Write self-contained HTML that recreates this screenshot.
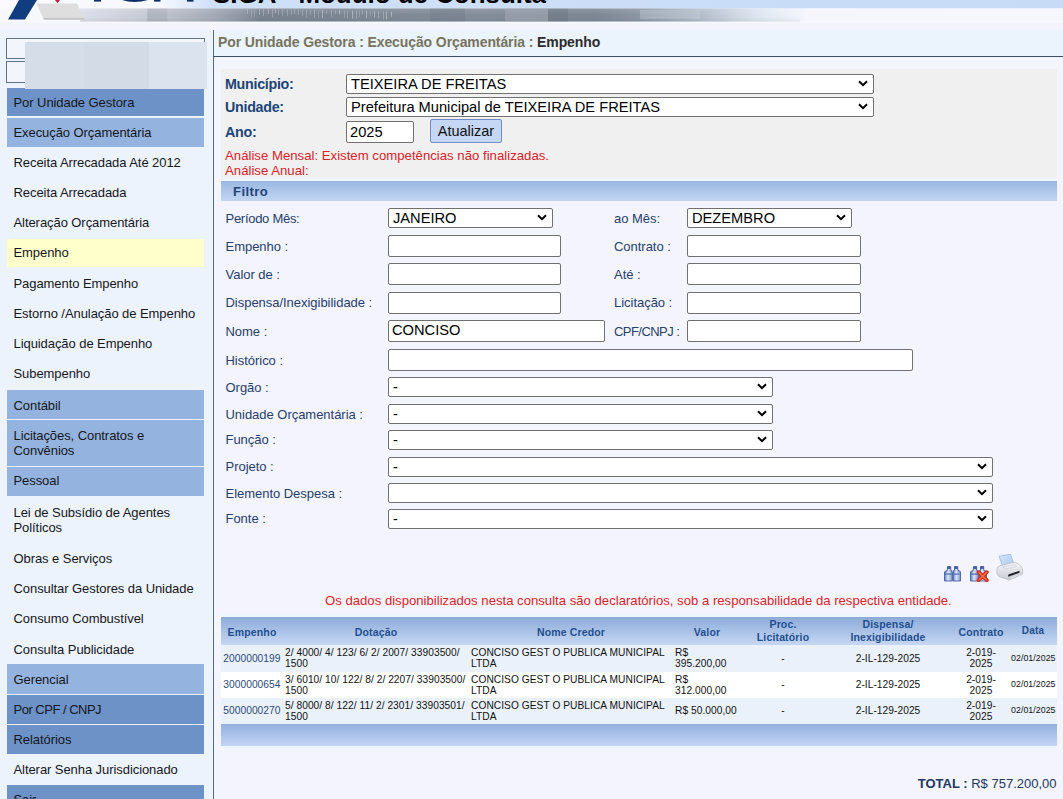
<!DOCTYPE html>
<html>
<head>
<meta charset="utf-8">
<title>Consulta</title>
<style>
html,body{margin:0;padding:0;}
body{width:1063px;height:799px;overflow:hidden;position:relative;background:#f3f4fd;font-family:"Liberation Sans",sans-serif;font-size:12px;color:#000;}
.abs{position:absolute;}
/* header */
/* sidebar */
#side{left:0;top:30px;width:213px;height:770px;background:#edf3fc;}
#vline{left:213px;top:30px;width:1px;height:769px;background:#566b80;}
#hline{left:213px;top:56px;width:850px;height:1px;background:#3c5063;}
.box{left:6px;width:196.5px;border:1px solid #627286;background:#f2f6fc;box-sizing:content-box;}
#ovl{left:25px;top:42px;width:182px;height:47px;}
#ovl i{position:absolute;top:0;height:47px;display:block;}
.mi{left:7px;width:197px;line-height:15.7px;box-sizing:border-box;padding-left:6.5px;font-size:13px;letter-spacing:-0.07px;color:#15171c;white-space:nowrap;overflow:hidden;}
.mi.two{white-space:normal;}
.d1{background:#6c92c7;}
.d2{background:#94b3de;}
.ye{background:#ffffcc;}
/* breadcrumb */
#bc{left:218px;top:34.4px;font-size:14px;font-weight:bold;color:#77735f;white-space:nowrap;letter-spacing:-0.1px;}
#bc b{color:#2b2b2b;}
/* grey panel */
#gp{left:220.5px;top:69px;width:836px;height:109px;background:#f0f0f0;}
.lb1{left:225px;font-size:14.3px;font-weight:bold;color:#1d4577;letter-spacing:-0.3px;}
.sel{background:#fff;border:1px solid #707070;border-radius:2px;box-sizing:border-box;font-size:14.67px;color:#000;white-space:nowrap;overflow:hidden;}
.sel span{position:absolute;left:4px;top:0;}
.sel svg{position:absolute;right:5px;top:50%;margin-top:-4px;}
.inp{background:#fff;border:1px solid #707070;border-radius:2px;box-sizing:border-box;font-size:14.67px;}
.red{color:#d8232a;font-size:13.2px;left:225px;white-space:nowrap;line-height:15px;}
#filtro{left:220.5px;top:181px;width:836px;height:20px;background:linear-gradient(180deg,#98b3dc 0,#9dbae3 8%,#c2d6f4 100%);box-shadow:0 -3px 0 #eef5fd;}
#filtro span{position:absolute;left:12.5px;top:3px;font-weight:bold;font-size:13px;letter-spacing:0.45px;color:#1f4478;line-height:15px;}
.lb2{font-size:13px;color:#27406a;white-space:nowrap;letter-spacing:-0.03px;left:225.5px;line-height:16px;}
.lb2.r{left:614px;}
.chev{position:absolute;right:5px;top:50%;margin-top:-4px;}
#redmsg{left:325px;top:593px;font-size:13.15px;color:#d8232a;white-space:nowrap;}
#th{left:220.5px;top:617px;width:836px;height:28px;background:linear-gradient(180deg,#8ba7d0 0,#90aedb 6%,#c6d7f4 100%);box-shadow:0 -3px 0 #eef5fd;}
.thc{font-size:10.5px;letter-spacing:0.15px;font-weight:bold;color:#1f4f8f;text-align:center;line-height:12px;white-space:nowrap;transform:translateX(-50%);}
.row{left:220.5px;width:836px;}
.td{font-size:10.2px;letter-spacing:0.05px;line-height:11px;color:#111;white-space:nowrap;}
.tdc{transform:translateX(-50%);text-align:center;}
#tf{left:220.5px;top:724px;width:836px;height:21.8px;background:linear-gradient(180deg,#92aed8 0,#97b4df 8%,#c3d4f6 100%);box-shadow:0 3px 0 #eef5fd;}
#total{right:6.5px;top:775.7px;font-size:13px;color:#22385c;white-space:nowrap;}

</style>
</head>
<body>
<svg class="abs" id="hdr" style="left:0;top:0;" width="1063" height="23" viewBox="0 0 1063 23">
<defs>
<linearGradient id="gtop" x1="0" y1="0" x2="1063" y2="0" gradientUnits="userSpaceOnUse">
<stop offset="0" stop-color="#fafaff"/><stop offset="0.15" stop-color="#f6f8ff"/><stop offset="0.2" stop-color="#cfe0f9"/><stop offset="1" stop-color="#c7dbf7"/>
</linearGradient>
<linearGradient id="gph" x1="0" y1="0" x2="1063" y2="0" gradientUnits="userSpaceOnUse">
<stop offset="0.075" stop-color="#dcdfeb"/><stop offset="0.138" stop-color="#c6cad5"/><stop offset="0.139" stop-color="#b0b4bf"/><stop offset="0.157" stop-color="#b0b4bf"/><stop offset="0.158" stop-color="#bbbfca"/><stop offset="0.2" stop-color="#a4aab6"/><stop offset="0.225" stop-color="#8f97a4"/><stop offset="0.245" stop-color="#78828e"/><stop offset="0.3" stop-color="#7a8491"/><stop offset="0.45" stop-color="#828c99"/><stop offset="0.56" stop-color="#7b8592"/><stop offset="0.6" stop-color="#8a95a3"/><stop offset="0.66" stop-color="#b3bdca"/><stop offset="0.71" stop-color="#dde4ef"/><stop offset="0.76" stop-color="#f5f7fd"/>
</linearGradient>
<linearGradient id="gphv" x1="0" y1="9" x2="0" y2="22" gradientUnits="userSpaceOnUse">
<stop offset="0" stop-color="#fff" stop-opacity="0.12"/><stop offset="0.5" stop-color="#fff" stop-opacity="0"/><stop offset="1" stop-color="#000" stop-opacity="0.08"/>
</linearGradient>
</defs>
<rect x="0" y="0" width="1063" height="23" fill="#f7f8fe"/>
<rect x="0" y="0" width="1063" height="8.5" fill="url(#gtop)"/>
<rect x="80" y="8.5" width="983" height="13" fill="url(#gph)"/>
<rect x="80" y="8.5" width="720" height="13" fill="url(#gphv)"/>
<rect x="247" y="9.0" width="1" height="5" fill="#dfe4ea" opacity="0.35"/><rect x="251" y="9.0" width="1" height="8" fill="#dfe4ea" opacity="0.3"/><rect x="254" y="9.0" width="1" height="8" fill="#dfe4ea" opacity="0.25"/><rect x="259" y="9.0" width="1" height="6" fill="#dfe4ea" opacity="0.35"/><rect x="263" y="9.0" width="1" height="7" fill="#dfe4ea" opacity="0.3"/><rect x="268" y="9.0" width="1" height="5" fill="#dfe4ea" opacity="0.35"/><rect x="272" y="9.0" width="1" height="8" fill="#dfe4ea" opacity="0.3"/><rect x="275" y="9.0" width="1" height="4" fill="#dfe4ea" opacity="0.35"/><rect x="278" y="9.0" width="1" height="6" fill="#dfe4ea" opacity="0.25"/><rect x="282" y="9.0" width="1" height="7" fill="#dfe4ea" opacity="0.3"/><rect x="287" y="9.0" width="1" height="7" fill="#dfe4ea" opacity="0.3"/><rect x="291" y="9.0" width="1" height="6" fill="#dfe4ea" opacity="0.25"/><rect x="294" y="9.0" width="1" height="5" fill="#dfe4ea" opacity="0.3"/><rect x="298" y="9.0" width="1" height="6" fill="#dfe4ea" opacity="0.3"/><rect x="302" y="9.1" width="1" height="7" fill="#dfe4ea" opacity="0.3"/><rect x="306" y="9.2" width="1" height="8" fill="#dfe4ea" opacity="0.3"/><rect x="310" y="9.3" width="1" height="6" fill="#dfe4ea" opacity="0.25"/><rect x="314" y="9.4" width="1" height="8" fill="#dfe4ea" opacity="0.35"/><rect x="318" y="9.5" width="1" height="8" fill="#dfe4ea" opacity="0.25"/><rect x="322" y="9.7" width="1" height="8" fill="#dfe4ea" opacity="0.45"/><rect x="326" y="9.8" width="1" height="4" fill="#dfe4ea" opacity="0.25"/><rect x="331" y="9.9" width="1" height="7" fill="#dfe4ea" opacity="0.25"/><rect x="335" y="10.1" width="1" height="4" fill="#dfe4ea" opacity="0.3"/><rect x="339" y="10.2" width="1" height="4" fill="#dfe4ea" opacity="0.45"/><rect x="344" y="10.3" width="1" height="7" fill="#dfe4ea" opacity="0.25"/><rect x="347" y="10.4" width="1" height="8" fill="#dfe4ea" opacity="0.25"/><rect x="352" y="10.6" width="1" height="8" fill="#dfe4ea" opacity="0.45"/><rect x="356" y="10.7" width="1" height="8" fill="#dfe4ea" opacity="0.35"/><rect x="359" y="10.8" width="1" height="6" fill="#dfe4ea" opacity="0.25"/><rect x="362" y="10.9" width="1" height="4" fill="#dfe4ea" opacity="0.25"/><rect x="366" y="11.0" width="1" height="7" fill="#dfe4ea" opacity="0.45"/><rect x="370" y="11.1" width="1" height="5" fill="#dfe4ea" opacity="0.25"/><rect x="374" y="11.2" width="1" height="6" fill="#dfe4ea" opacity="0.45"/><rect x="378" y="11.3" width="1" height="7" fill="#dfe4ea" opacity="0.3"/><rect x="383" y="11.5" width="1" height="8" fill="#dfe4ea" opacity="0.3"/><rect x="386" y="11.6" width="1" height="8" fill="#dfe4ea" opacity="0.45"/><rect x="391" y="11.7" width="1" height="5" fill="#dfe4ea" opacity="0.45"/><rect x="505" y="8.5" width="43" height="13" fill="#aab2bd" opacity="0.45"/><rect x="548" y="8.5" width="20" height="13" fill="#59626e" opacity="0.25"/><rect x="430" y="8.5" width="35" height="13" fill="#5d6672" opacity="0.2"/><rect x="640" y="10" width="60" height="9" fill="#c9d0da" opacity="0.35"/>
<polygon points="19,0 37,0 25,19.5 8,19.5" fill="#103d7f"/>
<polygon points="36.5,3.5 77,3.5 85,19.5 44,19.5" fill="#dedede"/>
<polygon points="43.2,18 84.2,18 85,19.8 44,19.8" fill="#c4c4c6"/>
<polygon points="55,0 60,0 57.5,3.2" fill="#c0203a"/>
<rect x="94" y="0" width="7" height="1.6" fill="#0d2e66"/>
<path d="M122 0 Q134 4 148 0 Z" fill="#0d2e66"/>
<rect x="154" y="0" width="6.5" height="1.6" fill="#0d2e66"/>
<rect x="187" y="0" width="6.5" height="1.6" fill="#0d2e66"/>
<text x="213" y="2.6" font-family="Liberation Sans" font-weight="bold" font-size="25" fill="#000" textLength="333" lengthAdjust="spacingAndGlyphs">SIGA - Módulo de Consulta</text>
</svg>
<div class="abs" id="side"></div>
<div class="abs" style="left:214px;top:30px;width:849px;height:26px;background:#ebf3fc;"></div>
<div class="abs" style="left:220.5px;top:62px;width:836px;height:7px;background:#f3f6fa;"></div>
<div class="abs" id="vline"></div>
<div class="abs" id="hline"></div>

<div class="abs box" style="top:38px;height:19px;"></div>
<div class="abs box" style="top:61px;height:20px;"></div>

<div class="abs mi d1" style="top:88.25px;height:27.3px;padding-top:6.90px;">Por Unidade Gestora</div>
<div class="abs mi d2" style="top:118px;height:28.75px;padding-top:6.85px;">Execução Orçamentária</div>
<div class="abs mi" style="top:148.75px;height:28.5px;padding-top:5.90px;">Receita Arrecadada Até 2012</div>
<div class="abs mi" style="top:179px;height:28.5px;padding-top:6.15px;">Receita Arrecadada</div>
<div class="abs mi" style="top:209.25px;height:28.5px;padding-top:5.90px;">Alteração Orçamentária</div>
<div class="abs mi ye" style="top:239px;height:28.4px;padding-top:6.45px;">Empenho</div>
<div class="abs mi" style="top:270px;height:28.5px;padding-top:6.45px;">Pagamento Empenho</div>
<div class="abs mi" style="top:300px;height:28.5px;padding-top:6.45px;">Estorno /Anulação de Empenho</div>
<div class="abs mi" style="top:330px;height:28.5px;padding-top:6.45px;">Liquidação de Empenho</div>
<div class="abs mi" style="top:360px;height:28.5px;padding-top:6.35px;">Subempenho</div>
<div class="abs mi d2" style="top:389.7px;height:29.3px;padding-top:8.05px;">Contábil</div>
<div class="abs mi d2 two" style="top:420px;height:46px;padding-top:7.75px;">Licitações, Contratos e<br>Convênios</div>
<div class="abs mi d2" style="top:467px;height:28.6px;padding-top:6.15px;">Pessoal</div>
<div class="abs mi two" style="top:498px;height:44px;padding-top:6.75px;">Lei de Subsídio de Agentes<br>Políticos</div>
<div class="abs mi" style="top:544px;height:28.5px;padding-top:6.75px;">Obras e Serviços</div>
<div class="abs mi" style="top:574px;height:28.5px;padding-top:6.85px;">Consultar Gestores da Unidade</div>
<div class="abs mi" style="top:604px;height:28.5px;padding-top:6.95px;">Consumo Combustível</div>
<div class="abs mi" style="top:635px;height:28.5px;padding-top:6.55px;">Consulta Publicidade</div>
<div class="abs mi d2" style="top:664px;height:29.6px;padding-top:7.85px;">Gerencial</div>
<div class="abs mi d1" style="top:695px;height:28.6px;padding-top:6.75px;letter-spacing:-0.5px;">Por CPF / CNPJ</div>
<div class="abs mi d1" style="top:725px;height:28.6px;padding-top:6.55px;">Relatórios</div>
<div class="abs mi" style="top:756px;height:28.5px;padding-top:6.45px;">Alterar Senha Jurisdicionado</div>
<div class="abs mi d1" style="top:785px;height:28.6px;padding-top:7.45px;">Sair</div>

<div class="abs" id="ovl"><i style="left:0;width:58.5px;background:#d5dde9"></i><i style="left:58.5px;width:65.5px;background:#d3dbe7"></i><i style="left:124px;width:58px;background:#dbe3ef"></i></div>
<div class="abs" id="bc">Por Unidade Gestora : Execução Orçamentária : <b>Empenho</b></div>

<div class="abs" id="gp"></div>
<div class="abs lb1" style="top:76px;">Município:</div>
<div class="abs lb1" style="top:99px;">Unidade:</div>
<div class="abs lb1" style="top:124px;">Ano:</div>
<div class="abs sel" style="left:346px;top:73.5px;width:528px;height:20.5px;line-height:18.5px;"><span>TEIXEIRA DE FREITAS</span><svg width="10" height="7" viewBox="0 0 10 7"><path d="M1 1.2 L5 5.2 L9 1.2" fill="none" stroke="#000" stroke-width="2"/></svg></div>
<div class="abs sel" style="left:346px;top:96.5px;width:528px;height:20.5px;line-height:18.5px;"><span>Prefeitura Municipal de TEIXEIRA DE FREITAS</span><svg width="10" height="7" viewBox="0 0 10 7"><path d="M1 1.2 L5 5.2 L9 1.2" fill="none" stroke="#000" stroke-width="2"/></svg></div>
<div class="abs inp" style="left:346px;top:120.5px;width:68px;height:22px;line-height:20px;padding-left:3px;">2025</div>
<div class="abs" style="left:430px;top:119px;width:72px;height:24px;box-sizing:border-box;border:1px solid #6f8fc4;background:#c5d7f5;border-radius:2px;font-size:14.5px;line-height:22px;text-align:center;color:#111;">Atualizar</div>
<div class="abs red" style="top:148px;">Análise Mensal: Existem competências não finalizadas.</div>
<div class="abs red" style="top:162.5px;">Análise Anual:</div>

<div class="abs" id="filtro"><span>Filtro</span></div>

<!-- filter rows -->
<div class="abs lb2" style="top:210.5px;letter-spacing:-0.28px;">Período Mês:</div>
<div class="abs lb2" style="top:238.6px;">Empenho :</div>
<div class="abs lb2" style="top:266.6px;">Valor de :</div>
<div class="abs lb2" style="top:295.3px;">Dispensa/Inexigibilidade :</div>
<div class="abs lb2" style="top:323.5px;">Nome :</div>
<div class="abs lb2" style="top:352.6px;">Histórico :</div>
<div class="abs lb2" style="top:379.7px;">Orgão :</div>
<div class="abs lb2" style="top:406.7px;">Unidade Orçamentária :</div>
<div class="abs lb2" style="top:432.1px;">Função :</div>
<div class="abs lb2" style="top:458.7px;">Projeto :</div>
<div class="abs lb2" style="top:485.6px;">Elemento Despesa :</div>
<div class="abs lb2" style="top:511.1px;">Fonte :</div>
<div class="abs lb2 r" style="top:210.5px;">ao Mês:</div>
<div class="abs lb2 r" style="top:238.6px;">Contrato :</div>
<div class="abs lb2 r" style="top:266.6px;">Até :</div>
<div class="abs lb2 r" style="top:295.3px;">Licitação :</div>
<div class="abs lb2 r" style="top:323.5px;letter-spacing:-0.55px;">CPF/CNPJ :</div>

<div class="abs sel" style="left:388px;top:208px;width:165px;height:20px;line-height:18px;"><span>JANEIRO</span><svg class="chev" width="10" height="7" viewBox="0 0 10 7"><path d="M1 1.2 L5 5.2 L9 1.2" fill="none" stroke="#000" stroke-width="2"/></svg></div>
<div class="abs sel" style="left:687px;top:208px;width:165px;height:20px;line-height:18px;"><span>DEZEMBRO</span><svg class="chev" width="10" height="7" viewBox="0 0 10 7"><path d="M1 1.2 L5 5.2 L9 1.2" fill="none" stroke="#000" stroke-width="2"/></svg></div>
<div class="abs inp" style="left:388px;top:235.2px;width:173px;height:21.6px;"></div>
<div class="abs inp" style="left:388px;top:263.4px;width:173px;height:21.6px;"></div>
<div class="abs inp" style="left:388px;top:292px;width:173px;height:21.6px;"></div>
<div class="abs inp" style="left:388px;top:320.2px;width:217px;height:21.6px;line-height:19px;padding-left:3px;">CONCISO</div>
<div class="abs inp" style="left:388px;top:349.2px;width:525px;height:21.6px;"></div>
<div class="abs inp" style="left:687px;top:235.2px;width:174px;height:21.6px;"></div>
<div class="abs inp" style="left:687px;top:263.4px;width:174px;height:21.6px;"></div>
<div class="abs inp" style="left:687px;top:292px;width:174px;height:21.6px;"></div>
<div class="abs inp" style="left:687px;top:320.2px;width:174px;height:21.6px;"></div>

<div class="abs sel" style="left:388px;top:377px;width:385px;height:20px;line-height:18px;"><span>-</span><svg class="chev" width="10" height="7" viewBox="0 0 10 7"><path d="M1 1.2 L5 5.2 L9 1.2" fill="none" stroke="#000" stroke-width="2"/></svg></div>
<div class="abs sel" style="left:388px;top:404px;width:385px;height:20px;line-height:18px;"><span>-</span><svg class="chev" width="10" height="7" viewBox="0 0 10 7"><path d="M1 1.2 L5 5.2 L9 1.2" fill="none" stroke="#000" stroke-width="2"/></svg></div>
<div class="abs sel" style="left:388px;top:430px;width:385px;height:20px;line-height:18px;"><span>-</span><svg class="chev" width="10" height="7" viewBox="0 0 10 7"><path d="M1 1.2 L5 5.2 L9 1.2" fill="none" stroke="#000" stroke-width="2"/></svg></div>
<div class="abs sel" style="left:388px;top:456.5px;width:605px;height:20px;line-height:18px;"><span>-</span><svg class="chev" width="10" height="7" viewBox="0 0 10 7"><path d="M1 1.2 L5 5.2 L9 1.2" fill="none" stroke="#000" stroke-width="2"/></svg></div>
<div class="abs sel" style="left:388px;top:483.3px;width:605px;height:20px;line-height:18px;"><svg class="chev" width="10" height="7" viewBox="0 0 10 7"><path d="M1 1.2 L5 5.2 L9 1.2" fill="none" stroke="#000" stroke-width="2"/></svg></div>
<div class="abs sel" style="left:388px;top:509.4px;width:605px;height:20px;line-height:18px;"><span>-</span><svg class="chev" width="10" height="7" viewBox="0 0 10 7"><path d="M1 1.2 L5 5.2 L9 1.2" fill="none" stroke="#000" stroke-width="2"/></svg></div>


<svg class="abs" style="left:944px;top:566px;" width="17" height="16" viewBox="0 0 17 16"><defs><linearGradient id="bg1" x1="0" y1="0" x2="1" y2="0"><stop offset="0" stop-color="#5f7dc0"/><stop offset="0.45" stop-color="#dde6f8"/><stop offset="1" stop-color="#7d97d2"/></linearGradient></defs>
<g stroke="#3a5599" stroke-width="0.8">
<path d="M3.5 0.5 h3.2 v3.8 h0.9 v1.4 h0.7 v9.3 h-7.8 v-9.3 h1.6 v-1.4 h1.4 z" fill="url(#bg1)"/>
<path d="M10.5 0.5 h3.2 v3.8 h1.4 v1.4 h1.4 v9.3 h-7.6 v-9.3 h0.7 v-1.4 h0.9 z" fill="url(#bg1)"/>
</g>
<rect x="3.3" y="0.4" width="3.6" height="2.6" fill="#4563ad"/><rect x="10.3" y="0.4" width="3.6" height="2.6" fill="#4563ad"/>
<rect x="0.9" y="7.3" width="7" height="1.6" fill="#4f6cb4" opacity="0.75"/><rect x="8.3" y="7.3" width="7" height="1.6" fill="#4f6cb4" opacity="0.75"/></svg>
<svg class="abs" style="left:970px;top:566px;" width="19" height="16" viewBox="0 0 19 16"><defs><linearGradient id="bg2" x1="0" y1="0" x2="1" y2="0"><stop offset="0" stop-color="#5f7dc0"/><stop offset="0.45" stop-color="#dde6f8"/><stop offset="1" stop-color="#7d97d2"/></linearGradient></defs>
<g stroke="#3a5599" stroke-width="0.8">
<path d="M3.5 0.5 h3.2 v3.8 h0.9 v1.4 h0.7 v9.3 h-7.8 v-9.3 h1.6 v-1.4 h1.4 z" fill="url(#bg2)"/>
<path d="M10.5 0.5 h3.2 v3.8 h1.4 v1.4 h1.4 v9.3 h-7.6 v-9.3 h0.7 v-1.4 h0.9 z" fill="url(#bg2)"/>
</g>
<rect x="3.3" y="0.4" width="3.6" height="2.6" fill="#4563ad"/><rect x="10.3" y="0.4" width="3.6" height="2.6" fill="#4563ad"/>
<rect x="0.9" y="7.3" width="7" height="1.6" fill="#4f6cb4" opacity="0.75"/><rect x="8.3" y="7.3" width="7" height="1.6" fill="#4f6cb4" opacity="0.75"/>
<path d="M8.6 6.2 L16.8 14.2 M16.8 6.2 L8.6 14.2" stroke="#d4261a" stroke-width="3.8" stroke-linecap="round"/>
<path d="M8.8 6.4 L16.6 14 M16.6 6.4 L8.8 14" stroke="#f2703c" stroke-width="1.5" stroke-linecap="round"/>
</svg>
<svg class="abs" style="left:996px;top:553px;" width="28" height="29" viewBox="0 0 28 29">
<defs><linearGradient id="pb" x1="0" y1="0" x2="0" y2="1"><stop offset="0" stop-color="#f4f5f8"/><stop offset="1" stop-color="#c9ccd4"/></linearGradient>
<linearGradient id="pp" x1="0" y1="0" x2="1" y2="1"><stop offset="0" stop-color="#d6e6fb"/><stop offset="1" stop-color="#a9c8f0"/></linearGradient></defs>
<path d="M3 3.2 L14.5 1.2 L18 11.5 L7 14 Z" fill="url(#pp)" stroke="#8fb0dd" stroke-width="0.7"/>
<path d="M1 16.5 Q1 13.5 4 12.8 L17 9.5 Q20 9 22.5 11 L25.5 14 Q26.5 15 26.5 17 V21 L13 27 L3 23.5 Q1 22.5 1 20.5 Z" fill="url(#pb)" stroke="#b4b8c2" stroke-width="0.7"/>
<path d="M7 14 L18 11.5 L20.5 13.2 L9.5 16 Z" fill="#e9edf4" stroke="#c2c7d2" stroke-width="0.5"/>
<path d="M12.3 21.6 L23.5 17.8 V19.8 L12.3 23.8 Z" fill="#1f2226"/>
<path d="M14 24.2 L25.5 19.8 L26.5 21 L15 26.2 Z" fill="#dfe2e8" stroke="#b9bdc6" stroke-width="0.5"/>
</svg>
<div class="abs" id="redmsg">Os dados disponibilizados nesta consulta são declaratórios, sob a responsabilidade da respectiva entidade.</div>

<!-- table -->
<div class="abs" id="th"></div>
<div class="abs thc" style="left:252px;top:626px;">Empenho</div>
<div class="abs thc" style="left:376px;top:626px;">Dotação</div>
<div class="abs thc" style="left:571px;top:626px;">Nome Credor</div>
<div class="abs thc" style="left:707px;top:626px;">Valor</div>
<div class="abs thc" style="left:783px;top:618.3px;line-height:12.7px;">Proc.<br>Licitatório</div>
<div class="abs thc" style="left:888px;top:618.3px;line-height:12.7px;">Dispensa/<br>Inexigibilidade</div>
<div class="abs thc" style="left:981px;top:626px;">Contrato</div>
<div class="abs thc" style="left:1033px;top:625px;font-size:10px;">Data</div>

<div class="abs row" style="top:645px;height:27px;background:#eaf1fb;"></div>
<div class="abs row" style="top:672px;height:26px;background:#ffffff;"></div>
<div class="abs row" style="top:698px;height:26px;background:#eaf1fb;"></div>
<div class="abs" id="tf"></div>

<div class="abs td" style="left:223.3px;top:653px;color:#2a4a7a;">2000000199</div>
<div class="abs td" style="left:285px;top:647px;">2/ 4000/ 4/ 123/ 6/ 2/ 2007/ 33903500/<br>1500</div>
<div class="abs td" style="left:471px;top:647px;">CONCISO GEST O PUBLICA MUNICIPAL<br>LTDA</div>
<div class="abs td" style="left:675px;top:647px;">R$<br>395.200,00</div>
<div class="abs td tdc" style="left:783px;top:653px;">-</div>
<div class="abs td tdc" style="left:888px;top:653px;">2-IL-129-2025</div>
<div class="abs td tdc" style="left:981px;top:647px;">2-019-<br>2025</div>
<div class="abs td" style="left:1011px;top:653px;font-size:8.8px;">02/01/2025</div>
<div class="abs td" style="left:223.3px;top:679.2px;color:#2a4a7a;">3000000654</div>
<div class="abs td" style="left:285px;top:674px;">3/ 6010/ 10/ 122/ 8/ 2/ 2207/ 33903500/<br>1500</div>
<div class="abs td" style="left:471px;top:674px;">CONCISO GEST O PUBLICA MUNICIPAL<br>LTDA</div>
<div class="abs td" style="left:675px;top:674px;">R$<br>312.000,00</div>
<div class="abs td tdc" style="left:783px;top:679.2px;">-</div>
<div class="abs td tdc" style="left:888px;top:679.2px;">2-IL-129-2025</div>
<div class="abs td tdc" style="left:981px;top:674px;">2-019-<br>2025</div>
<div class="abs td" style="left:1011px;top:679.2px;font-size:8.8px;">02/01/2025</div>
<div class="abs td" style="left:223.3px;top:705.2px;color:#2a4a7a;">5000000270</div>
<div class="abs td" style="left:285px;top:700px;">5/ 8000/ 8/ 122/ 11/ 2/ 2301/ 33903501/<br>1500</div>
<div class="abs td" style="left:471px;top:700px;">CONCISO GEST O PUBLICA MUNICIPAL<br>LTDA</div>
<div class="abs td" style="left:675px;top:705.2px;">R$ 50.000,00</div>
<div class="abs td tdc" style="left:783px;top:705.2px;">-</div>
<div class="abs td tdc" style="left:888px;top:705.2px;">2-IL-129-2025</div>
<div class="abs td tdc" style="left:981px;top:700px;">2-019-<br>2025</div>
<div class="abs td" style="left:1011px;top:705.2px;font-size:8.8px;">02/01/2025</div>

<div class="abs" id="total"><b>TOTAL :</b> R$ 757.200,00</div>
</body>
</html>
